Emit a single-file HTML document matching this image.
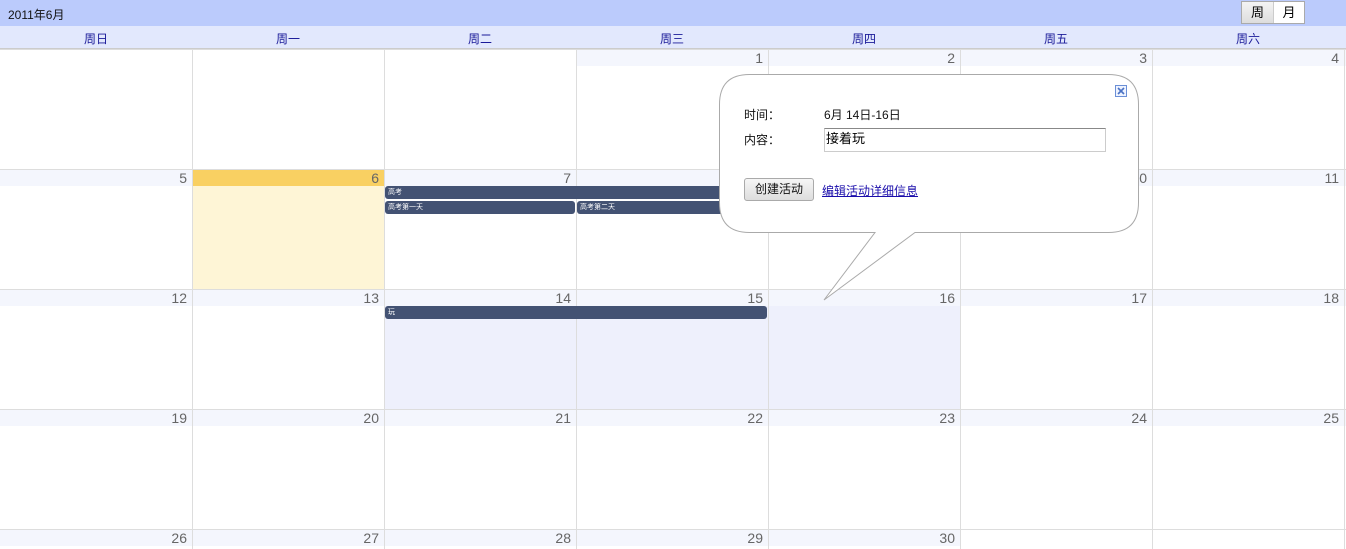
<!DOCTYPE html>
<html><head><meta charset="utf-8"><style>
*{margin:0;padding:0;box-sizing:border-box}
html,body{width:1346px;height:549px;overflow:hidden}
body{background:#fff;font-family:"Liberation Sans","Noto Sans CJK SC",sans-serif;font-size:12px;position:relative}
.top{position:absolute;left:0;top:0;width:1346px;height:26px;background:#bbcbfc}
.title{position:absolute;left:8px;top:6px;font-size:12px;color:#111}
.btns{position:absolute;left:1241px;top:1px;height:23px;display:flex;border:1px solid #aaa}
.btns div{width:31px;text-align:center;line-height:21px;font-size:13px}
.wk{position:absolute;left:0;top:26px;width:1346px;height:23px;background:#e2e8fd;border-bottom:1px solid #ccc}
.wk span{position:absolute;top:4px;width:192px;text-align:center;color:#1a1a99;font-size:12px}
.row{position:absolute;left:0;width:1346px;height:120px;border-top:1px solid #ddd}
.strip{position:absolute;left:0;top:0;width:1346px;height:16px;background:#f4f6fd}
.c{position:absolute;top:0;width:192px;height:120px;border-left:1px solid #ddd}
.n{position:absolute;right:5px;top:1px;font-size:14px;color:#666;line-height:15px}
.ev{position:absolute;height:13px;background:#435273;border-radius:3px;color:#fff;font-size:7px;line-height:13px;padding-left:3px}
.p{position:absolute;font-size:12px;color:#111}
</style></head><body>
<div class="top"><div class="title">2011年6月</div>
<div class="btns"><div style="background:linear-gradient(#f4f4f4,#ddd)">周</div><div style="background:#fff;border-left:1px solid #ccc">月</div></div></div>
<div class="wk"><span style="left:0">周日</span><span style="left:192px">周一</span><span style="left:384px">周二</span><span style="left:576px">周三</span><span style="left:768px">周四</span><span style="left:960px">周五</span><span style="left:1152px">周六</span></div>

<div class="row" style="top:49px"><div class="strip" style="left:576px;width:770px"></div>
<div class="c" style="left:-192px;border:0"></div><div class="c" style="left:0;border:0"></div><div class="c" style="left:192px"></div><div class="c" style="left:384px"></div>
<div class="c" style="left:576px"><span class="n">1</span></div><div class="c" style="left:768px"><span class="n">2</span></div><div class="c" style="left:960px"><span class="n">3</span></div><div class="c" style="left:1152px"><span class="n">4</span></div><div class="c" style="left:1344px"></div></div>

<div class="row" style="top:169px"><div class="strip"></div>
<div class="c" style="left:0;border:0"><span class="n">5</span></div>
<div class="c" style="left:192px;background:#fef5d6"><div style="height:16px;background:#f9d062"></div><span class="n">6</span></div>
<div class="c" style="left:384px"><span class="n">7</span></div><div class="c" style="left:576px"><span class="n">8</span></div><div class="c" style="left:768px"><span class="n">9</span></div><div class="c" style="left:960px"><span class="n">10</span></div><div class="c" style="left:1152px"><span class="n">11</span></div><div class="c" style="left:1344px"></div></div>

<div class="row" style="top:289px"><div class="strip"></div>
<div style="position:absolute;left:384px;top:16px;width:576px;height:104px;background:#eef0fc"></div>
<div class="c" style="left:0;border:0"><span class="n">12</span></div><div class="c" style="left:192px"><span class="n">13</span></div><div class="c" style="left:384px"><span class="n">14</span></div><div class="c" style="left:576px"><span class="n">15</span></div><div class="c" style="left:768px"><span class="n">16</span></div><div class="c" style="left:960px"><span class="n">17</span></div><div class="c" style="left:1152px"><span class="n">18</span></div><div class="c" style="left:1344px"></div></div>

<div class="row" style="top:409px"><div class="strip"></div>
<div class="c" style="left:0;border:0"><span class="n">19</span></div><div class="c" style="left:192px"><span class="n">20</span></div><div class="c" style="left:384px"><span class="n">21</span></div><div class="c" style="left:576px"><span class="n">22</span></div><div class="c" style="left:768px"><span class="n">23</span></div><div class="c" style="left:960px"><span class="n">24</span></div><div class="c" style="left:1152px"><span class="n">25</span></div><div class="c" style="left:1344px"></div></div>

<div class="row" style="top:529px"><div class="strip" style="width:960px"></div>
<div class="c" style="left:0;border:0"><span class="n">26</span></div><div class="c" style="left:192px"><span class="n">27</span></div><div class="c" style="left:384px"><span class="n">28</span></div><div class="c" style="left:576px"><span class="n">29</span></div><div class="c" style="left:768px"><span class="n">30</span></div><div class="c" style="left:960px"></div><div class="c" style="left:1152px"></div><div class="c" style="left:1344px"></div></div>

<div class="ev" style="left:385px;top:186px;width:382px">高考</div>
<div class="ev" style="left:385px;top:201px;width:190px">高考第一天</div>
<div class="ev" style="left:577px;top:201px;width:190px">高考第二天</div>
<div class="ev" style="left:385px;top:306px;width:382px">玩</div>

<svg style="position:absolute;left:0;top:0" width="1346" height="549">
<path d="M749.5 74.5 H1108.5 Q1138.5 74.5 1138.5 104.5 V202.5 Q1138.5 232.5 1108.5 232.5 H915 L824 300 L875 232.5 H749.5 Q719.5 232.5 719.5 202.5 V104.5 Q719.5 74.5 749.5 74.5 Z" fill="#fff" stroke="#aaa" stroke-width="1"/>
<rect x="1115.5" y="85.5" width="11" height="11" fill="#eef3ff" stroke="#6b8fd6"/>
<path d="M1118 88 L1124 94 M1124 88 L1118 94" stroke="#4a72c4" stroke-width="1.6"/>
</svg>
<div class="p" style="left:744px;top:106px">时间：</div>
<div class="p" style="left:824px;top:106px">6月 14日-16日</div>
<div class="p" style="left:744px;top:131px">内容：</div>
<div class="p" style="left:824px;top:128px;width:282px;height:24px;border:1px solid #ccc;border-top-color:#888;line-height:20px;padding-left:1px;color:#000;font-size:13px">接着玩</div>
<div class="p" style="left:744px;top:178px;width:70px;height:23px;border:1px solid #aaa;border-radius:3px;background:linear-gradient(#f6f6f6,#ddd);text-align:center;line-height:21px">创建活动</div>
<div class="p" style="left:822px;top:182px;color:#1a0dab;text-decoration:underline">编辑活动详细信息</div>
</body></html>
